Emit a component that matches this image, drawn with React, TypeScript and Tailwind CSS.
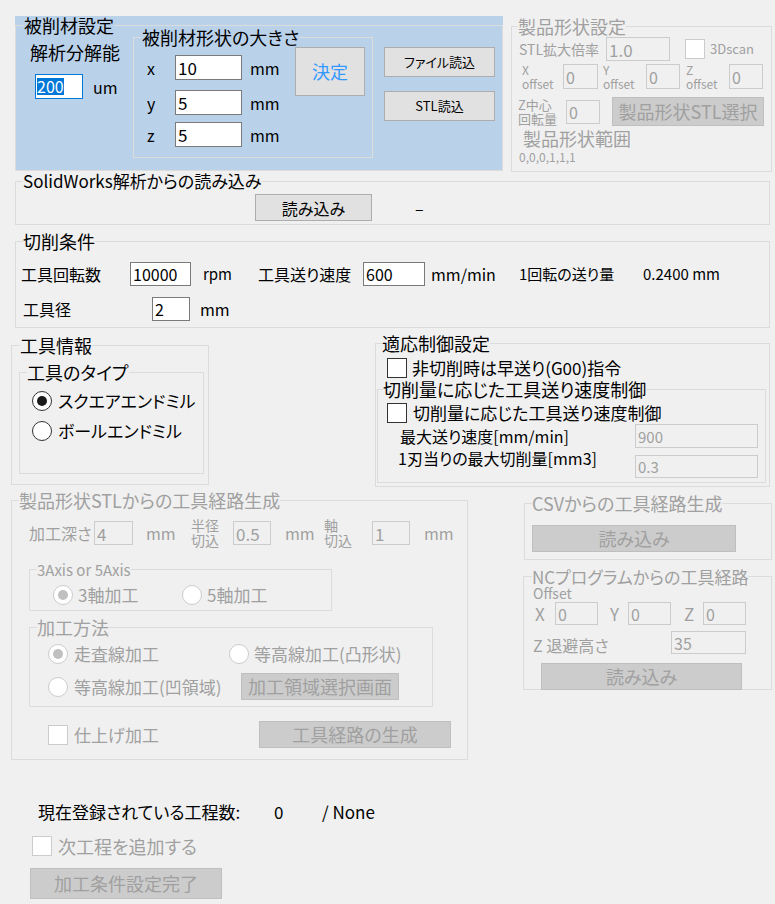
import React from 'react';

const GRAY = 'text-[#a0a0a0]';

function Group({
  title,
  className,
  legendClass = 'ml-[7px] text-[18px] leading-[18px]',
  disabled,
  children,
}: {
  title: string;
  className: string;
  legendClass?: string;
  disabled?: boolean;
  children?: React.ReactNode;
}) {
  return (
    <fieldset className={`min-w-0 border border-[#dcdcdc] ${className}`}>
      <legend className={`${legendClass} ${disabled ? GRAY : ''} whitespace-nowrap`}>{title}</legend>
      {children}
    </fieldset>
  );
}

function TextBox({
  value,
  className,
  disabled,
}: {
  value: string;
  className: string;
  disabled?: boolean;
}) {
  return (
    <div
      className={`flex shrink-0 items-center border px-[2px] leading-none ${
        disabled ? 'border-[#cccccc] bg-[#f0f0f0] text-[#a0a0a0]' : 'border-[#7a7a7a] bg-white text-black'
      } ${className}`}
    >
      {value}
    </div>
  );
}

function Btn({
  label,
  className,
  disabled,
}: {
  label: string;
  className: string;
  disabled?: boolean;
}) {
  return (
    <div
      className={`flex shrink-0 items-center justify-center border whitespace-nowrap ${
        disabled ? 'border-[#bfbfbf] bg-[#cccccc] text-[#a0a0a0]' : 'border-[#adadad] bg-[#e1e1e1]'
      } ${className}`}
    >
      {label}
    </div>
  );
}

function Check({ disabled }: { disabled?: boolean }) {
  return (
    <div
      className={`h-[20px] w-[20px] shrink-0 border bg-white ${
        disabled ? 'border-[#cccccc]' : 'border-[#333333]'
      }`}
    />
  );
}

function Radio({ checked, disabled }: { checked?: boolean; disabled?: boolean }) {
  return (
    <div
      className={`flex h-[20px] w-[20px] shrink-0 items-center justify-center rounded-full border bg-white ${
        disabled ? 'border-[#cccccc]' : 'border-[#333333]'
      }`}
    >
      {checked && (
        <div className={`h-[10px] w-[10px] rounded-full ${disabled ? 'bg-[#c0c0c0]' : 'bg-[#1a1a1a]'}`} />
      )}
    </div>
  );
}

function WorkpieceRow() {
  return (
    <div className="flex items-start pt-[16px]">
      {/* 被削材設定 (blue panel) */}
      <div className="ml-[15px] h-[155px] w-[488px] bg-[#bad1ea]">
        <Group
          title="被削材設定"
          className="h-full w-full border-[#d6e2f0]"
          legendClass="ml-[8px] text-[18px] leading-[18px]"
        >
          <div className="flex items-start">
            <div className="ml-[14px] w-[103px]">
              <div className="mt-[9px] text-[18px] leading-[18px]">解析分解能</div>
              <div className="mt-[13px] flex items-center">
                <div className="ml-[5px] flex h-[25px] w-[48px] items-center border border-[#0078d7] bg-white px-[1px]">
                  <span className="bg-[#0078d7] text-[16px] leading-[17px] text-white">200</span>
                </div>
                <span className="ml-[10px] text-[16px]">um</span>
              </div>
            </div>

            <Group
              title="被削材形状の大きさ"
              className="mt-[-6px] h-[130px] w-[240px] border-[#d6e2f0]"
              legendClass="ml-[8px] text-[18px] leading-[18px]"
            >
              <div className="flex items-start">
                <div className="ml-[13px] w-[148px] text-[16px]">
                  {[
                    ['x', '10', 'mt-[9px]'],
                    ['y', '5', 'mt-[10px]'],
                    ['z', '5', 'mt-[7px]'],
                  ].map(([axis, v, mt]) => (
                    <div key={axis} className={`flex h-[25px] items-center ${mt}`}>
                      <span className="w-[28px]">{axis}</span>
                      <TextBox value={v} className="h-[25px] w-[67px] text-[17px]" />
                      <span className="ml-[8px]">mm</span>
                    </div>
                  ))}
                </div>
                <Btn label="決定" className="mt-[1px] h-[49px] w-[70px] text-[18px] text-[#3399ff]" />
              </div>
            </Group>

            <div className="ml-[11px] flex flex-col text-[13px]">
              <Btn label="ファイル読込" className="mt-[13px] h-[30px] w-[111px]" />
              <Btn label="STL読込" className="mt-[14px] h-[30px] w-[111px]" />
            </div>
          </div>
        </Group>
      </div>

      {/* 製品形状設定 (disabled) */}
      <Group
        title="製品形状設定"
        disabled
        className="ml-[8px] mt-[1px] h-[155px] w-[261px]"
        legendClass="ml-[6px] text-[18px] leading-[18px]"
      >
        <div className={`flex flex-col ${GRAY}`}>
          <div className="mt-[2px] flex h-[24px] items-center">
            <span className="ml-[7px] w-[87px] text-[14px]">STL拡大倍率</span>
            <TextBox disabled value="1.0" className="h-[24px] w-[64px] text-[17px]" />
            <div className="ml-[15px]">
              <Check disabled />
            </div>
            <span className="ml-[5px] text-[13px]">3Dscan</span>
          </div>

          <div className="mt-[2px] flex h-[27px] items-center text-[12px] leading-[14px]">
            <span className="ml-[10px] w-[41px]">
              X<br />offset
            </span>
            <TextBox disabled value="0" className="h-[25px] w-[35px] text-[16px]" />
            <span className="ml-[5px] w-[43px]">
              Y<br />offset
            </span>
            <TextBox disabled value="0" className="h-[25px] w-[34px] text-[16px]" />
            <span className="ml-[6px] w-[43px]">
              Z<br />offset
            </span>
            <TextBox disabled value="0" className="h-[25px] w-[34px] text-[16px]" />
          </div>

          <div className="mt-[7px] flex h-[29px] items-center">
            <span className="ml-[6px] w-[48px] text-[13px] leading-[14px]">
              Z中心<br />回転量
            </span>
            <TextBox disabled value="0" className="h-[24px] w-[34px] text-[16px]" />
            <Btn disabled label="製品形状STL選択" className="ml-[12px] h-[29px] w-[152px] text-[18px]" />
          </div>

          <div className="ml-[11px] mt-[3px] text-[18px] leading-[18px]">製品形状範囲</div>
          <div className="ml-[7px] mt-[4px] text-[12px] leading-[12px]">0,0,0,1,1,1</div>
        </div>
      </Group>
    </div>
  );
}

function CuttingRows() {
  return (
    <>
      <Group
        title="SolidWorks解析からの読み込み"
        className="ml-[15px] h-[53px] w-[755px]"
        legendClass="ml-[7px] text-[17px] leading-[18px]"
      >
        <div className="flex items-center">
          <Btn label="読み込み" className="ml-[239px] mt-[4px] h-[27px] w-[117px] text-[16px]" />
          <span className="ml-[43px] mt-[4px] text-[16px]">–</span>
        </div>
      </Group>

      <Group title="切削条件" className="ml-[15px] mt-[7px] h-[96px] w-[755px]">
        <div className="flex flex-col text-[16px]">
          <div className="mt-[12px] flex h-[24px] items-center">
            <span className="ml-[5px] w-[109px]">工具回転数</span>
            <TextBox value="10000" className="h-[24px] w-[61px] text-[16px]" />
            <span className="ml-[12px] w-[55px] text-[15px]">rpm</span>
            <span className="w-[105px]">工具送り速度</span>
            <TextBox value="600" className="h-[24px] w-[62px] text-[16px]" />
            <span className="ml-[6px] w-[88px]">mm/min</span>
            <span className="w-[124px] text-[15px]">1回転の送り量</span>
            <span className="text-[15px]">0.2400 mm</span>
          </div>
          <div className="mt-[11px] flex h-[24px] items-center">
            <span className="ml-[7px] w-[129px]">工具径</span>
            <TextBox value="2" className="h-[24px] w-[38px] text-[16px]" />
            <span className="ml-[10px]">mm</span>
          </div>
        </div>
      </Group>
    </>
  );
}

function ToolRow() {
  return (
    <div className="mt-[6px] flex items-start">
      <Group
        title="工具情報"
        className="ml-[11px] mt-[2px] h-[149px] w-[198px]"
        legendClass="ml-[8px] text-[18px] leading-[18px]"
      >
        <Group title="工具のタイプ" className="ml-[7px] mt-[9px] h-[111px] w-[185px]">
          <div className="ml-[12px] mt-[10px] flex h-[20px] items-center">
            <Radio checked />
            <span className="ml-[6px] text-[17px]">スクエアエンドミル</span>
          </div>
          <div className="ml-[12px] mt-[10px] flex h-[20px] items-center">
            <Radio />
            <span className="ml-[6px] text-[17px]">ボールエンドミル</span>
          </div>
        </Group>
      </Group>

      <Group
        title="適応制御設定"
        className="ml-[166px] h-[153px] w-[395px]"
        legendClass="ml-[6px] text-[18px] leading-[18px]"
      >
        <div className="ml-[11px] mt-[6px] flex h-[20px] items-center">
          <Check />
          <span className="ml-[5px] text-[17px]">非切削時は早送り(G00)指令</span>
        </div>
        <Group
          title="切削量に応じた工具送り速度制御"
          className="ml-[1px] mt-[2px] h-[103px] w-[389px]"
          legendClass="ml-[5px] text-[18px] leading-[18px]"
        >
          <div className="ml-[9px] mt-[5px] flex h-[20px] items-center">
            <Check />
            <span className="ml-[6px] text-[17px]">切削量に応じた工具送り速度制御</span>
          </div>
          <div className="mt-[1px] flex h-[24px] items-center text-[16px]">
            <span className="ml-[22px] w-[235px]">最大送り速度[mm/min]</span>
            <TextBox disabled value="900" className="h-[24px] w-[123px] text-[15px]" />
          </div>
          <div className="mt-[7px] flex h-[23px] items-start text-[16px]">
            <span className="ml-[20px] mt-[-6px] w-[237px] leading-[18px]">1刃当りの最大切削量[mm3]</span>
            <TextBox disabled value="0.3" className="h-[23px] w-[123px] text-[15px]" />
          </div>
        </Group>
      </Group>
    </div>
  );
}

function PathRow() {
  return (
    <div className="mt-[4px] flex items-start">
      <Group title="製品形状STLからの工具経路生成" disabled className="ml-[11px] h-[269px] w-[457px]">
        <div className={`flex flex-col ${GRAY}`}>
          <div className="mt-[9px] flex h-[30px] items-center text-[16px]">
            <span className="ml-[17px] w-[65px]">加工深さ</span>
            <TextBox disabled value="4" className="h-[24px] w-[39px] text-[17px]" />
            <span className="ml-[13px] w-[45px]">mm</span>
            <span className="w-[42px] text-[14px] leading-[15px]">
              半径<br />切込
            </span>
            <TextBox disabled value="0.5" className="h-[24px] w-[38px] text-[17px]" />
            <span className="ml-[14px] w-[39px]">mm</span>
            <span className="w-[48px] text-[14px] leading-[15px]">
              軸<br />切込
            </span>
            <TextBox disabled value="1" className="h-[24px] w-[38px] text-[17px]" />
            <span className="ml-[14px]">mm</span>
          </div>

          <Group
            title="3Axis or 5Axis"
            disabled
            className="ml-[17px] mt-[14px] h-[49px] w-[303px]"
            legendClass="ml-[7px] text-[15px] leading-[15px]"
          >
            <div className={`ml-[23px] mt-[8px] flex h-[20px] items-center text-[17px] ${GRAY}`}>
              <div className="flex w-[129px] items-center">
                <Radio checked disabled />
                <span className="ml-[5px]">3軸加工</span>
              </div>
              <Radio disabled />
              <span className="ml-[5px]">5軸加工</span>
            </div>
          </Group>

          <Group title="加工方法" disabled className="ml-[17px] mt-[7px] h-[89px] w-[404px]">
            <div className={`flex flex-col text-[17px] ${GRAY}`}>
              <div className="ml-[18px] mt-[8px] flex h-[20px] items-center">
                <div className="flex w-[181px] items-center">
                  <Radio checked disabled />
                  <span className="ml-[6px]">走査線加工</span>
                </div>
                <Radio disabled />
                <span className="ml-[5px]">等高線加工(凸形状)</span>
              </div>
              <div className="ml-[18px] mt-[9px] flex h-[27px] items-center">
                <div className="flex w-[193px] items-center">
                  <Radio disabled />
                  <span className="ml-[6px]">等高線加工(凹領域)</span>
                </div>
                <Btn disabled label="加工領域選択画面" className="h-[27px] w-[158px] text-[18px]" />
              </div>
            </div>
          </Group>

          <div className="ml-[36px] mt-[14px] flex h-[27px] items-center text-[17px]">
            <div className="flex w-[211px] items-center">
              <Check disabled />
              <span className="ml-[6px]">仕上げ加工</span>
            </div>
            <Btn disabled label="工具経路の生成" className="h-[27px] w-[192px] text-[18px]" />
          </div>
        </div>
      </Group>

      <div className="ml-[56px] flex flex-col">
        <Group title="CSVからの工具経路生成" disabled className="mt-[3px] h-[66px] w-[248px]">
          <Btn disabled label="読み込み" className="ml-[7px] mt-[13px] h-[27px] w-[204px] text-[18px]" />
        </Group>

        <Group
          title="NCプログラムからの工具経路"
          disabled
          className="ml-[-1px] mt-[8px] h-[122px] w-[249px]"
          legendClass="ml-[8px] text-[17px] leading-[17px]"
        >
          <div className={`flex flex-col ${GRAY}`}>
            <div className="ml-[9px] mt-[1px] text-[14px] leading-[15px]">Offset</div>
            <div className="mt-[1px] flex h-[23px] items-center text-[17px]">
              <span className="ml-[11px] w-[20px]">X</span>
              <TextBox disabled value="0" className="h-[23px] w-[43px] text-[16px]" />
              <span className="ml-[12px] w-[18px]">Y</span>
              <TextBox disabled value="0" className="h-[23px] w-[43px] text-[16px]" />
              <span className="ml-[13px] w-[19px]">Z</span>
              <TextBox disabled value="0" className="h-[23px] w-[43px] text-[16px]" />
            </div>
            <div className="mt-[6px] flex h-[23px] items-center text-[16px]">
              <span className="ml-[9px] mt-[4px] w-[138px]">Z 退避高さ</span>
              <TextBox disabled value="35" className="h-[23px] w-[75px] text-[16px]" />
            </div>
            <Btn disabled label="読み込み" className="ml-[17px] mt-[9px] h-[27px] w-[201px] text-[18px]" />
          </div>
        </Group>
      </div>
    </div>
  );
}

export default function App() {
  return (
    <div className="h-[904px] w-[775px] overflow-hidden bg-[#f0f0f0] text-black [font-family:'Noto_Sans_CJK_JP',sans-serif] [font-feature-settings:'palt']">
      <WorkpieceRow />
      <CuttingRows />
      <ToolRow />
      <PathRow />

      <div className="mt-[43px] flex h-[18px] items-center text-[17px]">
        <span className="ml-[38px] w-[236px]">現在登録されている工程数:</span>
        <span className="w-[48px]">0</span>
        <span>/ None</span>
      </div>
      <div className="ml-[32px] mt-[15px] flex h-[20px] items-center">
        <Check disabled />
        <span className={`ml-[6px] text-[18px] ${GRAY}`}>次工程を追加する</span>
      </div>
      <Btn disabled label="加工条件設定完了" className="ml-[30px] mt-[12px] h-[31px] w-[192px] text-[18px]" />
    </div>
  );
}
